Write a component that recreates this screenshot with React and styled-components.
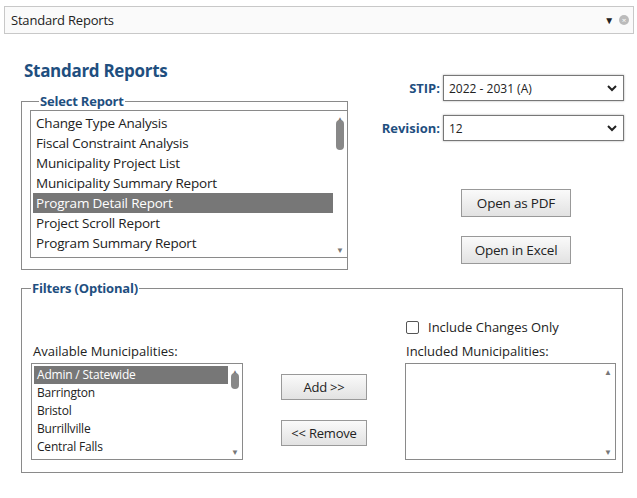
import React from "react";
import styled, { createGlobalStyle } from "styled-components";

const Global = createGlobalStyle`
  body { margin: 0; background: #fff; font-family: "Open Sans", "Noto Sans", sans-serif; color: #222; }
`;

const Page = styled.div`
  width: 637px;
  height: 498px;
  padding: 6px 3px 0 4px;
  box-sizing: border-box;
`;

const TopBar = styled.div`
  height: 26px;
  border: 1px solid #c8c8c8;
  background: #fafafa;
  display: flex;
  align-items: center;
  padding: 0 4px 0 6px;
  font-size: 13px;
  letter-spacing: -0.2px;
`;
const Grow = styled.div`flex: 1;`;
const Caret = styled.span`font-size: 10px; margin-right: 5px;`;
const Clear = styled.span`
  width: 10px; height: 10px; border-radius: 50%;
  background: #bbb; color: #fff; font-size: 8px; line-height: 10px; text-align: center;
`;

const Body = styled.div`
  padding: 0 10px 0 17px;
  display: flex;
  flex-direction: column;
`;
const Upper = styled.div`display: flex;`;
const Left = styled.div`width: 327px;`;
const Title = styled.h1`
  margin: 25px 0 10px 3px;
  font-size: 17px;
  font-weight: 700;
  color: #1f4f7f;
  letter-spacing: -0.3px;
`;
const Fieldset = styled.fieldset`
  margin: 0;
  border: 1px solid #8a8a8a;
  padding: ${p => p.$pad};
  min-width: 0;
`;
const Legend = styled.legend`
  font-size: 13px;
  font-weight: 700;
  color: #1f4f7f;
  padding: 0 1px;
  margin-left: 9px;
  letter-spacing: -0.2px;
`;
const ListBox = styled.div`
  border: 1px solid #8a8a8a;
  display: flex;
  height: ${p => p.$h}px;
  width: ${p => p.$w}px;
  box-sizing: border-box;
  padding: 2px 0 2px 2px;
  background: #fff;
  grid-row: 3;
  grid-column: ${p => p.$col || "auto"};
`;
const Items = styled.div`flex: 1;`;
const Item = styled.div`
  height: ${p => p.$h}px;
  line-height: ${p => p.$h}px;
  font-size: ${p => p.$fs}px;
  padding-left: 3px;
  letter-spacing: -0.2px;
  white-space: nowrap;
  background: ${p => (p.$sel ? "#777" : "transparent")};
  color: ${p => (p.$sel ? "#fff" : "#222")};
`;
const Scroll = styled.div`
  width: 14px;
  display: flex;
  flex-direction: column;
  align-items: center;
  justify-content: space-between;
  font-size: 8px;
  color: #777;
`;
const Thumb = styled.div`
  width: 8px; height: ${p => p.$h}px; background: #888; border-radius: 4px;
  margin-top: -4px;
`;
const Right = styled.div`
  flex: 1;
  display: flex;
  flex-direction: column;
  align-items: flex-end;
  padding-top: 41px;
`;
const FormRow = styled.div`
  display: flex; align-items: center; gap: 3px; margin-bottom: 14px;
`;
const Label = styled.span`
  font-size: 13px; font-weight: 700; color: #1f4f7f;
`;
const Select = styled.div`
  width: 181px; height: 26px; box-sizing: border-box;
  border: 1px solid #777; box-shadow: 0 0 2px #aaa;
  display: flex; align-items: center; padding: 0 6px 0 5px;
  font-size: 12px; justify-content: space-between;
`;
const Buttons = styled.div`
  align-self: flex-start;
  margin-left: 113px;
  margin-top: 34px;
  display: flex; flex-direction: column; gap: 19px;
`;
const Button = styled.div`
  width: ${p => p.$w}px; height: ${p => p.$h}px;
  box-sizing: border-box;
  border: 1px solid #999;
  background: linear-gradient(#fafafa, #e2e2e2);
  display: flex; align-items: center; justify-content: center;
  font-size: ${p => p.$fs}px;
  letter-spacing: -0.2px;
`;
const Lower = styled.div`margin-top: 9px; width: 602px;`;
const FilterGrid = styled.div`
  display: grid;
  grid-template-columns: 212px 162px 211px;
  grid-template-rows: 42px 24px auto;
  padding: 0 0 12px 9px;
`;
const Check = styled.div`
  grid-column: 3; grid-row: 1; align-self: end;
  display: flex; align-items: center; gap: 9px; font-size: 13px; padding-bottom: 3px; margin-left: 1px;
`;
const Box = styled.div`width: 11px; height: 11px; border: 1px solid #555; border-radius: 2px;`;
const SubLabel = styled.div`
  grid-row: 2; grid-column: ${p => p.$col}; font-size: 13px; align-self: center; margin-left: ${p => p.$ml}px;
`;
const Mid = styled.div`
  grid-row: 3; grid-column: 2;
  display: flex; flex-direction: column; align-items: center; gap: 20px; padding-top: 11px;
`;

const reports = [
  "Change Type Analysis",
  "Fiscal Constraint Analysis",
  "Municipality Project List",
  "Municipality Summary Report",
  "Program Detail Report",
  "Project Scroll Report",
  "Program Summary Report",
];
const munis = ["Admin / Statewide", "Barrington", "Bristol", "Burrillville", "Central Falls"];

const Chevron = () => (
  <svg width="10" height="7" viewBox="0 0 10 7"><path d="M1 1l4 4 4-4" stroke="#222" strokeWidth="2" fill="none" /></svg>
);

export default function App() {
  return (
    <Page>
      <Global />
      <TopBar>
        Standard Reports<Grow /><Caret>▼</Caret><Clear>×</Clear>
      </TopBar>
      <Body>
        <Upper>
          <Left>
            <Title>Standard Reports</Title>
            <Fieldset $pad="0 0 11px 8px">
              <Legend>Select Report</Legend>
              <ListBox $h={148} $w={318}>
                <Items>
                  {reports.map((r, i) => (
                    <Item key={r} $h={20} $fs={13.5} $sel={i === 4}>{r}</Item>
                  ))}
                </Items>
                <Scroll><span>▲</span><Thumb $h={30} /><Grow /><span>▼</span></Scroll>
              </ListBox>
            </Fieldset>
          </Left>
          <Right>
            <FormRow><Label>STIP:</Label><Select>2022 - 2031 (A)<Chevron /></Select></FormRow>
            <FormRow><Label>Revision:</Label><Select>12<Chevron /></Select></FormRow>
            <Buttons>
              <Button $w={110} $h={28} $fs={13.5}>Open as PDF</Button>
              <Button $w={110} $h={28} $fs={13.5}>Open in Excel</Button>
            </Buttons>
          </Right>
        </Upper>
        <Lower>
          <Fieldset $pad="0">
            <Legend>Filters (Optional)</Legend>
            <FilterGrid>
              <Check><Box />Include Changes Only</Check>
              <SubLabel $col={1} $ml={2}>Available Municipalities:</SubLabel>
              <SubLabel $col={3} $ml={1}>Included Municipalities:</SubLabel>
              <ListBox $h={97} $w={212} $col={1}>
                <Items>
                  {munis.map((m, i) => (
                    <Item key={m} $h={18} $fs={12} $sel={i === 0}>{m}</Item>
                  ))}
                </Items>
                <Scroll><span>▲</span><Thumb $h={16} /><Grow /><span>▼</span></Scroll>
              </ListBox>
              <Mid>
                <Button $w={86} $h={26} $fs={13}>Add &gt;&gt;</Button>
                <Button $w={86} $h={26} $fs={13}>&lt;&lt; Remove</Button>
              </Mid>
              <ListBox $h={97} $w={211} $col={3}>
                <Items />
                <Scroll><span>▲</span><Grow /><span>▼</span></Scroll>
              </ListBox>
            </FilterGrid>
          </Fieldset>
        </Lower>
      </Body>
    </Page>
  );
}
